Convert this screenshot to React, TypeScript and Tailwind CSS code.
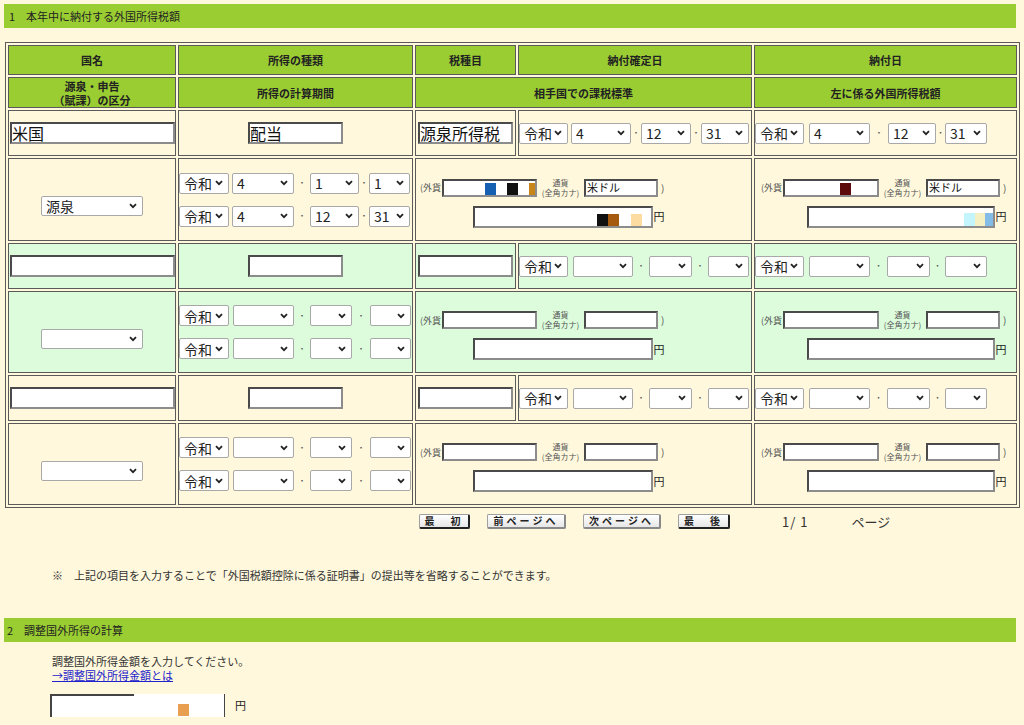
import type { ReactNode } from 'react';

type DateCfg = { w: string[]; g: string[] };

// widths of the four selects and of the three gaps between them
const dA4: DateCfg = { w: ['w-[49px]', 'w-[60px]', 'w-[50px]', 'w-[48px]'], g: ['w-[3px]', 'w-[10px]', 'w-[10px]'] };
const dA5: DateCfg = { w: ['w-[49px]', 'w-[61px]', 'w-[48px]', 'w-[42px]'], g: ['w-[5px]', 'w-[18px]', 'w-[9px]'] };
const dC4: DateCfg = { w: ['w-[49px]', 'w-[60px]', 'w-[43px]', 'w-[41px]'], g: ['w-[5px]', 'w-[16px]', 'w-[16px]'] };
const dC5: DateCfg = { w: ['w-[49px]', 'w-[61px]', 'w-[43px]', 'w-[42px]'], g: ['w-[5px]', 'w-[17px]', 'w-[15px]'] };
const dB2: DateCfg = { w: ['w-[50px]', 'w-[62px]', 'w-[49px]', 'w-[41px]'], g: ['w-[3px]', 'w-[16px]', 'w-[10px]'] };
const dD2: DateCfg = { w: ['w-[50px]', 'w-[61px]', 'w-[42px]', 'w-[41px]'], g: ['w-[4px]', 'w-[16px]', 'w-[18px]'] };

function Chev() {
  return (
    <svg width="8" height="6" viewBox="0 0 8 6" className="shrink-0">
      <path d="M1 1.2l3 3 3-3" fill="none" stroke="#222" strokeWidth="1.8" />
    </svg>
  );
}

function Sel({ w, v, h = 'h-[21px]' }: { w: string; v?: string; h?: string }) {
  return (
    <div className={`flex ${h} ${w} items-center justify-between rounded-[2px] border border-[#a8a8a8] bg-white pl-[4px] pr-[5px] text-[14px] leading-none text-[#222]`}>
      <span>{v}</span>
      <Chev />
    </div>
  );
}

function Dot({ w }: { w: string }) {
  return <span className={`${w} text-center text-[8px] leading-none text-[#555]`}>・</span>;
}

function DateRow({ cfg, v }: { cfg: DateCfg; v?: [string, string, string] }) {
  return (
    <div className="flex items-center">
      <Sel w={cfg.w[0]} v="令和" />
      <span className={cfg.g[0]} />
      <Sel w={cfg.w[1]} v={v?.[0]} />
      <Dot w={cfg.g[1]} />
      <Sel w={cfg.w[2]} v={v?.[1]} />
      <Dot w={cfg.g[2]} />
      <Sel w={cfg.w[3]} v={v?.[2]} />
    </div>
  );
}

function Box({ cls, children }: { cls: string; children?: ReactNode }) {
  return (
    <div className={`relative flex items-center overflow-hidden border-2 border-[#4a4a4a] border-b-[#8c8c8c] border-r-[#8c8c8c] bg-white leading-none text-[#111] ${cls}`}>
      {children}
    </div>
  );
}

function Fx({ kana, col5, m1, m2 }: { kana?: string; col5?: boolean; m1?: ReactNode; m2?: ReactNode }) {
  return (
    <div className={`inline-flex flex-col gap-[8px] pt-[6px] ${col5 ? 'pl-[6px]' : 'pl-[4px]'}`}>
      <div className="flex items-center">
        <span className="text-[9px] leading-none text-[#555]">(外貨</span>
        <Box cls={`ml-[1px] h-[18px] ${col5 ? 'w-[96px]' : 'w-[95px]'}`}>{m1}</Box>
        <div className="flex w-[47px] flex-col items-center text-[8px] leading-[10px] text-[#555]">
          <span>通貨</span>
          <span>(全角カナ)</span>
        </div>
        <Box cls="h-[18px] w-[74px] pl-[1px] text-[11px]">{kana}</Box>
        <span className="ml-[3px] text-[10px] leading-none text-[#555]">)</span>
      </div>
      <div className="flex items-center justify-end">
        <Box cls={col5 ? 'h-[22px] w-[188px]' : 'h-[22px] w-[180px]'}>{m2}</Box>
        <span className="text-[11px] leading-none">円</span>
      </div>
    </div>
  );
}

function PBtn({ children, w, dark }: { children: ReactNode; w: string; dark?: boolean }) {
  return (
    <div
      className={`flex h-[15px] ${w} items-center justify-center rounded-[2px] border border-[#a0a0a0] border-b-2 border-r-2 bg-gradient-to-b from-white to-[#e6e6e6] text-[10px] font-bold leading-none tracking-[3px] text-[#222] ${
        dark ? 'border-b-[#222] border-r-[#222]' : 'border-b-[#888] border-r-[#888]'
      }`}
    >
      {children}
    </div>
  );
}

const th = 'border border-[#5a5a5a] bg-[#9acd32] p-0 text-center align-middle text-[11px] font-bold leading-[14px] text-[#222]';
const td = 'border border-[#5a5a5a] p-0 align-middle';

function EmptyRows({ bg }: { bg: string }) {
  return (
    <>
      <tr className={`h-[46px] ${bg}`}>
        <td className={`${td} pl-px`}>
          <Box cls="h-[22px] w-[165px]" />
        </td>
        <td className={td}>
          <div className="flex justify-center">
            <Box cls="h-[22px] w-[95px]" />
          </div>
        </td>
        <td className={`${td} pl-[2px]`}>
          <Box cls="h-[22px] w-[95px]" />
        </td>
        <td className={td}>
          <DateRow cfg={dC4} />
        </td>
        <td className={td}>
          <DateRow cfg={dC5} />
        </td>
      </tr>
      <tr className={`h-[82px] ${bg}`}>
        <td className={`${td} pt-[13px]`}>
          <div className="flex justify-center">
            <Sel w="w-[102px]" h="h-[20px]" />
          </div>
        </td>
        <td className={td}>
          <div className="flex flex-col gap-[12px]">
            <DateRow cfg={dD2} />
            <DateRow cfg={dD2} />
          </div>
        </td>
        <td className={td} colSpan={2}>
          <Fx />
        </td>
        <td className={td}>
          <Fx col5 />
        </td>
      </tr>
    </>
  );
}

export default function App() {
  return (
    <div className="min-h-[725px] w-[1024px] bg-[#fff8dc] pt-[4px] font-['Noto_Sans_CJK_JP',sans-serif] text-[#222]">
      <div className="ml-[4px] flex h-[24px] w-[1012px] items-center bg-[#9acd32] pl-[5px] text-[11px] leading-none">
        1　本年中に納付する外国所得税額
      </div>

      <table className="ml-[5px] mt-[14px] w-[1015px] table-fixed border-separate border-spacing-[2px] border border-[#5a5a5a] bg-[#fff8dc]">
        <colgroup>
          <col className="w-[168px]" />
          <col className="w-[235px]" />
          <col className="w-[101px]" />
          <col className="w-[234px]" />
          <col className="w-[263px]" />
        </colgroup>
        <tbody>
          <tr className="h-[30px]">
            <td className={th}>国名</td>
            <td className={th}>所得の種類</td>
            <td className={th}>税種目</td>
            <td className={th}>納付確定日</td>
            <td className={th}>納付日</td>
          </tr>
          <tr className="h-[31px]">
            <td className={th}>
              源泉・申告
              <br />
              （賦課）の区分
            </td>
            <td className={th}>所得の計算期間</td>
            <td className={th} colSpan={2}>
              相手国での課税標準
            </td>
            <td className={th}>左に係る外国所得税額</td>
          </tr>

          <tr className="h-[46px]">
            <td className={`${td} pl-px`}>
              <Box cls="h-[22px] w-[165px] text-[16px]">米国</Box>
            </td>
            <td className={td}>
              <div className="flex justify-center">
                <Box cls="h-[22px] w-[95px] text-[16px]">配当</Box>
              </div>
            </td>
            <td className={`${td} pl-[2px]`}>
              <Box cls="h-[22px] w-[95px] text-[16px]">源泉所得税</Box>
            </td>
            <td className={td}>
              <DateRow cfg={dA4} v={['4', '12', '31']} />
            </td>
            <td className={td}>
              <DateRow cfg={dA5} v={['4', '12', '31']} />
            </td>
          </tr>
          <tr className="h-[83px]">
            <td className={`${td} pt-[13px]`}>
              <div className="flex justify-center">
                <Sel w="w-[102px]" h="h-[20px]" v="源泉" />
              </div>
            </td>
            <td className={td}>
              <div className="flex flex-col gap-[12px]">
                <DateRow cfg={dB2} v={['4', '1', '1']} />
                <DateRow cfg={dB2} v={['4', '12', '31']} />
              </div>
            </td>
            <td className={td} colSpan={2}>
              <Fx
                kana="米ドル"
                m1={
                  <>
                    <span className="absolute left-[41px] top-[2px] h-[12px] w-[11px] bg-[#1560b0]" />
                    <span className="absolute left-[63px] top-[2px] h-[12px] w-[11px] bg-[#111]" />
                    <span className="absolute left-[85px] top-[2px] h-[12px] w-[8px] bg-[#c8861a]" />
                  </>
                }
                m2={
                  <>
                    <span className="absolute left-[122px] top-[6px] h-[12px] w-[11px] bg-[#111]" />
                    <span className="absolute left-[133px] top-[6px] h-[12px] w-[11px] bg-[#a65a10]" />
                    <span className="absolute left-[156px] top-[6px] h-[12px] w-[11px] bg-[#fcdca0]" />
                  </>
                }
              />
            </td>
            <td className={td}>
              <Fx
                col5
                kana="米ドル"
                m1={<span className="absolute left-[55px] top-[2px] h-[12px] w-[11px] bg-[#5c0a0a]" />}
                m2={
                  <>
                    <span className="absolute left-[155px] top-[5px] h-[13px] w-[11px] bg-[#c4f4fc]" />
                    <span className="absolute left-[166px] top-[5px] h-[13px] w-[10px] bg-[#f4f0c4]" />
                    <span className="absolute left-[176px] top-[5px] h-[13px] w-[9px] bg-[#84bce8]" />
                  </>
                }
              />
            </td>
          </tr>

          <EmptyRows bg="bg-[#dcfcdc]" />
          <EmptyRows bg="bg-[#fff8dc]" />
        </tbody>
      </table>

      <div className="ml-[419px] mt-[6px] flex items-center gap-[17px]">
        <PBtn w="w-[51px]" dark>
          最　初
        </PBtn>
        <PBtn w="w-[79px]">前ページへ</PBtn>
        <PBtn w="w-[78px]">次ページへ</PBtn>
        <PBtn w="w-[52px]" dark>
          最　後
        </PBtn>
        <span className="ml-[35px] whitespace-pre text-[13px] leading-none tracking-[1px] text-[#333]">1/ 1</span>
        <span className="ml-[26px] text-[13px] leading-none text-[#333]">ページ</span>
      </div>

      <p className="ml-[52px] mt-[39px] text-[11px] leading-[14px] text-[#333]">
        ※　上記の項目を入力することで「外国税額控除に係る証明書」の提出等を省略することができます。
      </p>

      <div className="ml-[4px] mt-[36px] flex h-[24px] w-[1012px] items-center bg-[#9acd32] pl-[3px] text-[11px] leading-none">
        2　調整国外所得の計算
      </div>

      <div className="ml-[52px] mt-[12px] flex flex-col text-[11px] leading-[14px] text-[#333]">
        <span>調整国外所得金額を入力してください。</span>
        <span className="text-[#2222cc] underline">→調整国外所得金額とは</span>
      </div>

      <div className="ml-[50px] mt-[12px] flex items-center">
        <div className="relative h-[23px] w-[175px] border-l-2 border-r border-[#444] bg-white">
          <div className="h-[2px] w-[82px] bg-[#444]" />
          <span className="absolute left-[126px] top-[10px] h-[12px] w-[11px] bg-[#e8a050]" />
        </div>
        <span className="ml-[10px] text-[11px] leading-none">円</span>
      </div>
    </div>
  );
}
